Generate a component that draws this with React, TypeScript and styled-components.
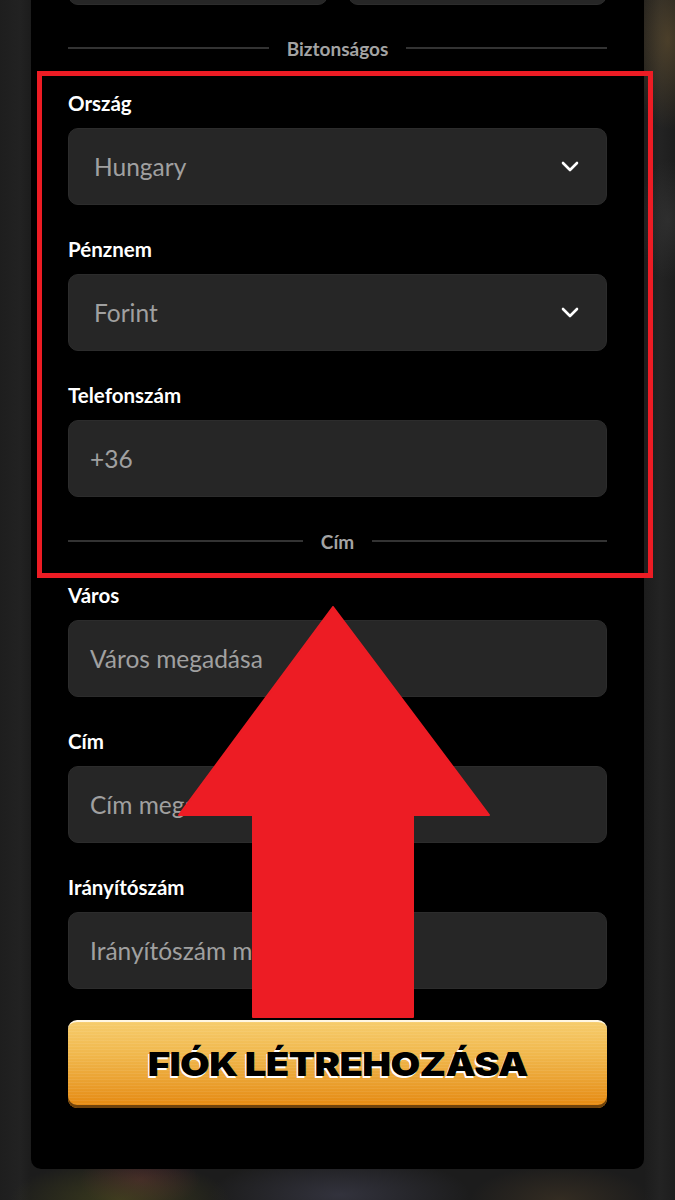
import React, { FC } from 'react';
import styled, { createGlobalStyle } from 'styled-components';

const GlobalStyle = createGlobalStyle`
  html, body {
    margin: 0;
    padding: 0;
    background: #1b1b1b;
  }
`;

const Page = styled.div`
  position: relative;
  width: 675px;
  height: 1200px;
  overflow: hidden;
  font-family: Lato, 'Noto Sans', sans-serif;
  background:
    radial-gradient(ellipse 40px 90px at 668px 40px, rgba(110, 88, 50, 0.55), rgba(110, 88, 50, 0) 100%),
    radial-gradient(ellipse 30px 60px at 668px 220px, rgba(60, 60, 60, 0.5), rgba(60, 60, 60, 0) 100%),
    radial-gradient(ellipse 110px 40px at 120px 1200px, rgba(80, 80, 30, 0.6), rgba(80, 80, 30, 0) 100%),
    radial-gradient(ellipse 60px 30px at 140px 1180px, rgba(110, 40, 60, 0.45), rgba(110, 40, 60, 0) 100%),
    radial-gradient(ellipse 130px 40px at 340px 1195px, rgba(60, 60, 75, 0.7), rgba(60, 60, 75, 0) 100%),
    radial-gradient(ellipse 90px 35px at 560px 1200px, rgba(75, 60, 40, 0.5), rgba(75, 60, 40, 0) 100%),
    linear-gradient(90deg, #1e1e1e 0px, #222 20px, #1c1c1c 31px, #1c1c1c 644px, #232323 660px, #1d1d1d 675px);
`;

const Panel = styled.div`
  margin: -72px 31px 0;
  padding: 0 37px 61px;
  background: #000;
  border-radius: 0 0 10px 10px;
  display: flex;
  flex-direction: column;
`;

const Row = styled.div`
  display: grid;
  grid-template-columns: 1fr 1fr;
  gap: 20px;
`;

const Divider = styled.div<{ $top: number; $bottom: number }>`
  display: flex;
  align-items: center;
  gap: 18px;
  height: 20px;
  margin: ${(p) => p.$top}px 0 ${(p) => p.$bottom}px;
  font-size: 19px;
  font-weight: 700;
  color: #a3a3a3;

  &::before,
  &::after {
    content: '';
    flex: 1;
    height: 2px;
    background: #333;
  }
`;

const Group = styled.div`
  display: flex;
  flex-direction: column;
  margin-bottom: 33px;

  &:last-of-type {
    margin-bottom: 0;
  }
`;

const Label = styled.div`
  font-size: 20.5px;
  line-height: 22px;
  font-weight: 700;
  color: #fff;
  margin-bottom: 14px;
`;

const Box = styled.div<{ $pad: number }>`
  height: 77px;
  box-sizing: border-box;
  border: 1px solid #2c2c2c;
  border-radius: 10px;
  background: #262626;
  display: flex;
  align-items: center;
  justify-content: space-between;
  padding: 0 27px 0 ${(p) => p.$pad}px;
  font-size: 24.5px;
  color: #a0a0a0;
`;

const Chevron = styled.svg`
  width: 18px;
  height: 11px;
`;

const CreateButton = styled.button`
  margin-top: 31px;
  height: 88px;
  box-sizing: border-box;
  border: none;
  border-top: 2px solid #fff7e4;
  border-radius: 9px;
  box-shadow: inset 0 -3px 0 #6e420c;
  background:
    repeating-linear-gradient(180deg, rgba(255, 255, 255, 0.07) 0px, rgba(255, 255, 255, 0.07) 1px, rgba(0, 0, 0, 0) 1px, rgba(0, 0, 0, 0) 3px),
    linear-gradient(180deg, #f6cc6c 0%, #f0b64a 40%, #eaa02f 70%, #e5880f 100%);
  display: flex;
  align-items: center;
  justify-content: center;
  padding: 0 0 3px;
  cursor: pointer;
`;

const ButtonText = styled.span`
  display: inline-block;
  transform: scaleX(1.16);
  font-family: Inter, 'Liberation Sans', sans-serif;
  font-size: 33px;
  font-weight: 900;
  letter-spacing: -0.5px;
  color: #000;
  text-shadow: -1px 2px 0 #fff;
`;

const Highlight = styled.div`
  position: absolute;
  left: 37px;
  top: 71px;
  width: 616px;
  height: 507px;
  box-sizing: border-box;
  border: 5px solid #ed1c24;
  pointer-events: none;
`;

const Arrow = styled.svg`
  position: absolute;
  left: 178px;
  top: 606px;
  width: 312px;
  height: 413px;
  pointer-events: none;
`;

const DownIcon: FC = () => (
  <Chevron viewBox="0 0 18 11">
    <path d="M2 2 L9 9 L16 2" fill="none" stroke="#fff" strokeWidth="2.6" strokeLinecap="round" strokeLinejoin="round" />
  </Chevron>
);

interface FieldProps {
  label: string;
  value: string;
  select?: boolean;
}

const Field: FC<FieldProps> = ({ label, value, select }) => (
  <Group>
    <Label>{label}</Label>
    <Box $pad={select ? 25 : 21}>
      <span>{value}</span>
      {select && <DownIcon />}
    </Box>
  </Group>
);

export default function App() {
  return (
    <>
      <GlobalStyle />
      <Page>
        <Panel>
          <Row>
            <Box $pad={21} />
            <Box $pad={21} />
          </Row>
          <Divider $top={33} $bottom={34}>Biztonságos</Divider>
          <div>
            <Field label="Ország" value="Hungary" select />
            <Field label="Pénznem" value="Forint" select />
            <Field label="Telefonszám" value="+36" />
          </div>
          <Divider $top={34} $bottom={33}>Cím</Divider>
          <div>
            <Field label="Város" value="Város megadása" />
            <Field label="Cím" value="Cím megadása" />
            <Field label="Irányítószám" value="Irányítószám megadása" />
          </div>
          <CreateButton>
            <ButtonText>FIÓK LÉTREHOZÁSA</ButtonText>
          </CreateButton>
        </Panel>
        <Highlight />
        <Arrow viewBox="0 0 312 413">
          <path
            d="M155 1 L1 209 L75 209 L75 411 L235 411 L235 209 L311 209 Z"
            fill="#ed1c24"
            stroke="#ed1c24"
            strokeWidth="2"
            strokeLinejoin="round"
          />
        </Arrow>
      </Page>
    </>
  );
}
